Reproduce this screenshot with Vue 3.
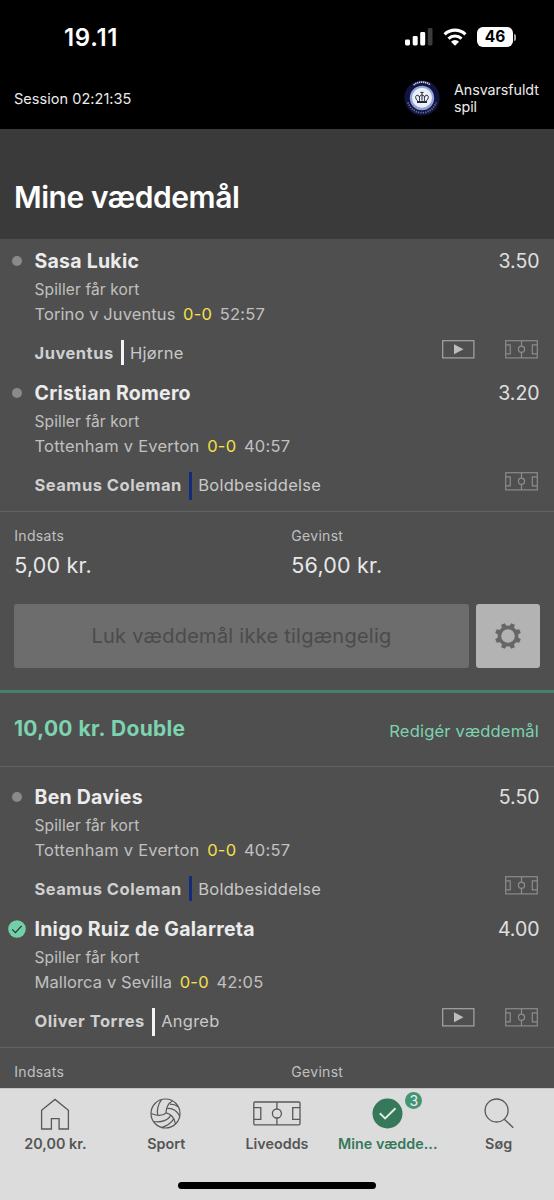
<script setup>
const bets = [
  {
    id: 1,
    legs: [
      { name: 'Sasa Lukic', odds: '3.50', match: 'Torino v Juventus', tight: true, time: '52:57', who: 'Juventus', what: 'Hjørne', colour: 'white', video: true },
      { name: 'Cristian Romero', odds: '3.20', match: 'Tottenham v Everton', time: '40:57', who: 'Seamus Coleman', what: 'Boldbesiddelse', colour: 'navy' }
    ],
    payout: true
  },
  {
    id: 2,
    header: true,
    legs: [
      { name: 'Ben Davies', odds: '5.50', match: 'Tottenham v Everton', time: '40:57', who: 'Seamus Coleman', what: 'Boldbesiddelse', colour: 'navy' },
      { name: 'Inigo Ruiz de Galarreta', odds: '4.00', match: 'Mallorca v Sevilla', tight: true, time: '42:05', who: 'Oliver Torres', what: 'Angreb', colour: 'white', video: true, won: true }
    ]
  }
]

const gearTeeth = Array.from({ length: 8 }, (_, i) => 22.5 + i * 45)
</script>

<template>
  <div class="phone">
    <header class="top">
      <div class="status">
        <span class="clock">19.11</span>
        <div class="status-icons">
          <svg class="signal" viewBox="0 0 28 18" width="28" height="18">
            <rect x="0" y="11.5" width="5" height="6" rx="1.4" fill="#fff" />
            <rect x="7.7" y="8" width="5" height="9.5" rx="1.4" fill="#fff" />
            <rect x="15.2" y="4" width="5" height="13.5" rx="1.4" fill="#fff" />
            <rect x="22.8" y="0" width="4.7" height="17.5" rx="1.4" fill="#3c3c3c" />
          </svg>
          <svg class="wifi" viewBox="0 0 24 18" width="24" height="18">
            <path d="M1.6 6.3a15 15 0 0 1 20.8 0" fill="none" stroke="#fff" stroke-width="3.2" />
            <path d="M5.5 10.6a9.4 9.4 0 0 1 13 0" fill="none" stroke="#fff" stroke-width="3" />
            <path d="M12 17.8l-4-4.1a5.8 5.8 0 0 1 8 0z" fill="#fff" />
          </svg>
          <div class="battery"><span>46</span></div>
          <i class="battery-tip"></i>
        </div>
      </div>
      <div class="session">
        <span class="session-text">Session 02:21:35</span>
        <div class="safe">
          <svg viewBox="0 0 36 36" width="36" height="36">
            <circle cx="18" cy="18" r="17.6" fill="#12133f" />
            <path d="M9.6 5a13.4 13.4 0 0 1 16.8 0" fill="none" stroke="#c6c9de" stroke-width="1.8" stroke-dasharray="1.4 .6" />
            <path d="M4 22.5a14.7 14.7 0 0 0 28 0" fill="none" stroke="#6d7195" stroke-width="1.8" stroke-dasharray="1.3 1.1" />
            <circle cx="18" cy="18" r="12.2" fill="#8fa5da" />
            <circle cx="18" cy="17.8" r="10" fill="#eceef8" />
            <g fill="none" stroke="#25273f" stroke-width="1">
              <path d="M13.6 20.8c-3.3-3-2-5.9 .3-5.5 1.5 .3 2 2.5 1.5 5.5M22.4 20.8c3.3-3 2-5.9-.3-5.5-1.5.3-2 2.5-1.5 5.5M18 20.6v-8M16.4 12.4h3.2M15.6 17c.3-2.6 4.5-2.6 4.8 0" />
              <path d="M13 22h10" stroke-width="2" />
            </g>
          </svg>
          <span class="safe-text">Ansvarsfuldt<br />spil</span>
        </div>
      </div>
    </header>

    <div class="heading"><h1>Mine væddemål</h1></div>

    <main class="bets">
      <section v-for="bet in bets" :key="bet.id" class="bet">
        <div v-if="bet.header" class="bet-head">
          <span class="bet-title">10,00 kr. Double</span>
          <span class="edit">Redigér væddemål</span>
        </div>

        <div class="legs" :class="{ padded: bet.header }">
          <article v-for="leg in bet.legs" :key="leg.name" class="leg">
            <div class="marker">
              <svg v-if="leg.won" viewBox="0 0 18 18" width="18" height="18">
                <circle cx="9" cy="9" r="8.8" fill="#72cfa9" />
                <path d="M4.2 9.4l3.2 3.2 6.2-6.8" fill="none" stroke="#26332e" stroke-width="1.2" />
              </svg>
              <i v-else class="dot"></i>
            </div>
            <div class="leg-body">
              <div class="leg-top">
                <span class="leg-name">{{ leg.name }}</span>
                <span class="odds">{{ leg.odds }}</span>
              </div>
              <div class="market">Spiller får kort</div>
              <div class="match">
                <span :class="{ tight: leg.tight }">{{ leg.match }}</span>
                <span class="score">0-0</span>
                <span>{{ leg.time }}</span>
              </div>
              <div class="stat">
                <b>{{ leg.who }}</b>
                <i class="bar" :class="leg.colour"></i>
                <span>{{ leg.what }}</span>
                <div class="icons">
                  <svg v-if="leg.video" viewBox="0 0 33 19" width="33" height="19">
                    <rect x=".7" y=".7" width="31.2" height="17.2" fill="none" stroke="#a6a6a6" stroke-width="1.2" />
                    <path d="M12 4.3l9.5 5-9.5 5z" fill="#bdbdbd" />
                  </svg>
                  <svg viewBox="0 0 33 19" width="33" height="19">
                    <g fill="none" stroke="#8c8c8c" stroke-width="1.2">
                      <rect x=".7" y=".7" width="31.6" height="17.2" />
                      <path d="M1 4.8h4.2v9H1M32 4.8h-4.7v9H32M16.5 .7v5.5M16.5 12.5v5.4" />
                      <circle cx="16.5" cy="9.3" r="3.1" />
                    </g>
                  </svg>
                </div>
              </div>
            </div>
          </article>
        </div>

        <div class="amounts">
          <div><small>Indsats</small><strong v-if="bet.payout">5,00 kr.</strong></div>
          <div><small>Gevinst</small><strong v-if="bet.payout">56,00 kr.</strong></div>
        </div>

        <div v-if="bet.payout" class="cashout">
          <button class="closed">Luk væddemål ikke tilgængelig</button>
          <button class="gear">
            <svg viewBox="0 0 32 32" width="32" height="32">
              <g fill="#676767">
                <path v-for="a in gearTeeth" :key="a" d="M13.4 6.8l.6-3.8h4l.6 3.8z" :transform="`rotate(${a} 16 16)`" />
              </g>
              <circle cx="16" cy="16" r="8.6" fill="none" stroke="#676767" stroke-width="3.6" />
            </svg>
          </button>
        </div>
      </section>
    </main>

    <nav class="tabs">
      <div class="tab">
        <svg viewBox="0 0 32 32" width="32" height="32">
          <path d="M2.6 31V12.2L16 1.4l13.4 10.8V31h-9.3V20.6h-7.7V31z" fill="none" stroke="#585858" stroke-width="1.3" />
        </svg>
        <span>20,00 kr.</span>
      </div>
      <div class="tab">
        <svg viewBox="0 0 32 32" width="32" height="32">
          <g fill="none" stroke="#585858" stroke-width="1.2">
            <circle cx="15.5" cy="15.5" r="14.5" />
            <path d="M16 14.8C13.5 17.5 8 18.2 1.2 15.5M16 14.8C16 10.5 18 5 22.5 3M16 14.8c4 .5 8.8 5 9.5 11.2" />
            <path d="M7.6 17.2C6.8 12 8 6.5 11.5 1.6M17 10.5c5-.5 10 2.5 12.7 7.5M20 6.2c3.5 0 6 .8 8 2.5M20.8 16.8c-1.5 4.5-8 8-17.6 6.7M24 20.7c-3 4.5-7 7.5-12.5 8.8" />
          </g>
        </svg>
        <span>Sport</span>
      </div>
      <div class="tab">
        <svg viewBox="0 0 48 32" width="48" height="32">
          <g fill="none" stroke="#585858" stroke-width="1.3">
            <rect x=".8" y="4" width="46.2" height="22.8" rx="1.2" />
            <path d="M.8 9.7h7v11.6h-7M47 9.7h-7.3v11.6H47M23.9 4v7M23.9 19.9v7" />
            <circle cx="23.9" cy="15.5" r="4.5" />
          </g>
        </svg>
        <span>Liveodds</span>
      </div>
      <div class="tab active">
        <svg viewBox="0 0 32 32" width="32" height="32">
          <circle cx="15.5" cy="15.5" r="15" fill="#35785a" />
          <path d="M7.8 15.3l5.3 5.1L23.5 10.2" fill="none" stroke="#e4eee8" stroke-width="1.9" />
        </svg>
        <em class="badge">3</em>
        <span>Mine vædde...</span>
      </div>
      <div class="tab">
        <svg viewBox="0 0 32 32" width="32" height="32">
          <g fill="none" stroke="#585858" stroke-width="1.3">
            <circle cx="13.6" cy="12.5" r="11.5" />
            <path d="M21.3 21.2l9 8.6" />
          </g>
        </svg>
        <span>Søg</span>
      </div>
      <i class="home-bar"></i>
    </nav>
  </div>
</template>

<style>
body { margin: 0; background: #4f4f4f; }
</style>

<style scoped>
* { box-sizing: border-box; }
.phone {
  width: 554px;
  height: 1200px;
  overflow: hidden;
  display: flex;
  flex-direction: column;
  font-family: Inter, sans-serif;
  background: #4f4f4f;
  color: #c0c0c0;
  white-space: nowrap;
}
.top { height: 129px; flex: none; background: #000; color: #fff; }
.status { height: 74px; padding: 0 38px 0 64px; display: flex; align-items: center; justify-content: space-between; }
.clock { font-size: 24px; font-weight: 600; letter-spacing: 0.7px; }
.status-icons { display: flex; align-items: center; }
.signal { margin-right: 10px; }
.wifi { margin-right: 10px; }
.battery { width: 36px; height: 20px; border-radius: 6px; background: #fff; color: #000; font-size: 15.5px; font-weight: 700; line-height: 20px; text-align: center; }
.battery-tip { width: 2px; height: 7px; margin: 0 0 0 1px; background: #aaa; border-radius: 0 2px 2px 0; }
.session { height: 48px; padding: 0 14px; display: flex; align-items: center; justify-content: space-between; color: #ebebeb; }
.session-text { font-size: 14.5px; letter-spacing: 0.04px; }
.safe { display: flex; align-items: center; gap: 14px; width: 136px; }
.safe svg { flex: none; }
.safe-text { font-size: 14.3px; line-height: 17px; letter-spacing: -0.07px; }
.heading { height: 110px; flex: none; padding-top: 48px; padding-left: 14px; background: #3a3a3a; }
h1 { margin: 0; font-size: 30px; line-height: 40px; font-weight: 600; color: #fff; letter-spacing: -0.45px; }
.bets { flex: 1; min-height: 0; overflow: hidden; }
.legs { padding-bottom: 8px; border-bottom: 1px solid #636363; }
.legs.padded { padding-top: 8px; }
.leg { height: 132px; display: flex; padding: 10px 15px 0 8px; }
.marker { width: 26.5px; height: 24px; display: flex; align-items: center; flex: none; margin-top: -0.5px; }
.dot { width: 10px; height: 10px; margin-left: 4px; border-radius: 50%; background: #8a8a8a; }
.leg-body { flex: 1; }
.leg-top { display: flex; justify-content: space-between; line-height: 24px; margin-bottom: 4px; }
.leg-name { font-size: 19.5px; font-weight: 700; color: #ebebeb; letter-spacing: 0.25px; }
.odds { font-size: 19.5px; color: #e0e0e0; margin-right: -0.6px; }
.market { font-size: 15.5px; line-height: 25px; letter-spacing: 0.12px; }
.match { display: flex; gap: 7.6px; font-size: 16.5px; line-height: 25px; letter-spacing: 0.23px; }
.tight { letter-spacing: 0.1px; }
.score { color: #f5e04a; }
.stat { display: flex; align-items: center; height: 24px; margin-top: 14px; font-size: 16.5px; letter-spacing: 0.25px; color: #c8c8c8; }
.stat b { font-weight: 700; letter-spacing: 0.5px; color: #d0d0d0; }
.bar { width: 3px; height: 25px; margin: -1px 6.4px 0 7px; }
.leg:last-child .bar { height: 28px; margin-top: 1px; }
.bar.white { background: #f4f4f4; }
.bar.navy { background: #152a7a; }
.icons { margin: -7px 1px 0 auto; display: flex; gap: 30px; }
.icons svg { display: block; }
.amounts { display: grid; grid-template-columns: 277px 1fr; padding: 14px 0 0 14.3px; }
.amounts small { display: block; font-size: 14px; line-height: 20px; letter-spacing: 0.3px; }
.amounts strong { display: block; margin-top: 3px; font-size: 21.5px; line-height: 32px; font-weight: 400; color: #e8e8e8; letter-spacing: 0.2px; }
.cashout { display: flex; gap: 7px; padding: 23px 14px 22px; }
.cashout button { height: 64px; border: 0; padding: 0; border-radius: 3px; font-family: inherit; }
.closed { flex: 1; background: #6d6d6d; color: #4b4b4b; font-size: 20px; letter-spacing: 0.25px; }
.gear { width: 64px; background: #b3b3b3; display: flex; align-items: center; justify-content: center; }
.bet-head { height: 77px; border-top: 3px solid #47806a; border-bottom: 1px solid #636363; padding: 0 15px 0 14px; display: flex; align-items: center; justify-content: space-between; color: #7dd3b0; }
.bet-title { font-size: 21px; font-weight: 700; letter-spacing: 0.3px; word-spacing: 0.5px; margin-top: -2px; }
.edit { font-size: 16.5px; margin-top: 2px; letter-spacing: 0.2px; }
.tabs { height: 112px; flex: none; position: relative; padding: 9px 0 0; background: #dcdcdc; border-top: 1px solid #c4c4c4; display: grid; grid-template-columns: repeat(5, 1fr); color: #555; }
.tab { position: relative; display: flex; flex-direction: column; align-items: center; font-size: 14.3px; font-weight: 600; }
.tab svg { flex: none; }
.tab span { line-height: 20px; margin-top: 4px; letter-spacing: 0.03px; }
.tab.active { color: #35785a; }
.badge { position: absolute; left: 73px; top: -6px; width: 17px; height: 17px; border-radius: 50%; background: #429673; color: #eee; font-size: 14px; font-style: normal; font-weight: 400; line-height: 17px; text-align: center; }
.home-bar { position: absolute; left: 178px; top: 93px; width: 198px; height: 7px; border-radius: 4px; background: #000; }
</style>
